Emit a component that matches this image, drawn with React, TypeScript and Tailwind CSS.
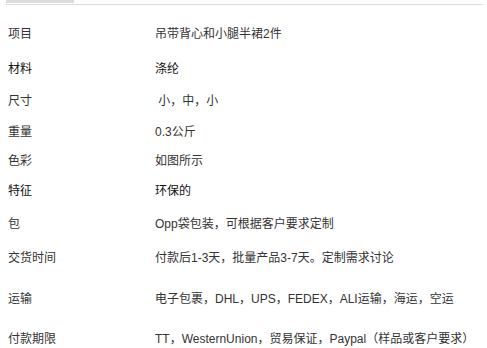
type Spec = {
  label: string;
  value: string;
  h: string;
  dark?: boolean;
};

const specs: Spec[] = [
  { label: "项目", value: "吊带背心和小腿半裙2件", h: "h-[36px]" },
  { label: "材料", value: "涤纶", h: "h-[33px]", dark: true },
  { label: "尺寸", value: " 小，中，小", h: "h-[32px]" },
  { label: "重量", value: "0.3公斤", h: "h-[29px]" },
  { label: "色彩", value: "如图所示", h: "h-[29px]" },
  { label: "特征", value: "环保的", h: "h-[32px]", dark: true },
  { label: "包", value: "Opp袋包装，可根据客户要求定制", h: "h-[33px]" },
  { label: "交货时间", value: "付款后1-3天，批量产品3-7天。定制需求讨论", h: "h-[36px]" },
  { label: "运输", value: "电子包裹，DHL，UPS，FEDEX，ALI运输，海运，空运", h: "h-[46px]" },
  { label: "付款期限", value: "TT，WesternUnion，贸易保证，Paypal（样品或客户要求）", h: "h-[34px]" },
];

export default function App() {
  return (
    <div className="h-[348px] w-[487px] overflow-hidden bg-white font-['Liberation_Sans','Noto_Sans_CJK_SC',sans-serif] text-[12px] text-[#333]">
      <div className="px-[6px]">
        <div className="h-[3px] w-[68px] bg-[#dcdcdc]" />
        <div className="mt-[1px] h-px w-[477px] bg-[#dcdcdc]" />
      </div>
      <div className="mt-[11px] flex flex-col">
        {specs.map((s) => (
          <div key={s.label} className={`flex items-center ${s.h}`}>
            <div className={`w-[155px] shrink-0 pl-[8px] ${s.dark ? "text-[#111]" : ""}`}>{s.label}</div>
            <div className={`whitespace-pre ${s.dark ? "text-[#111]" : ""}`}>{s.value}</div>
          </div>
        ))}
      </div>
    </div>
  );
}
